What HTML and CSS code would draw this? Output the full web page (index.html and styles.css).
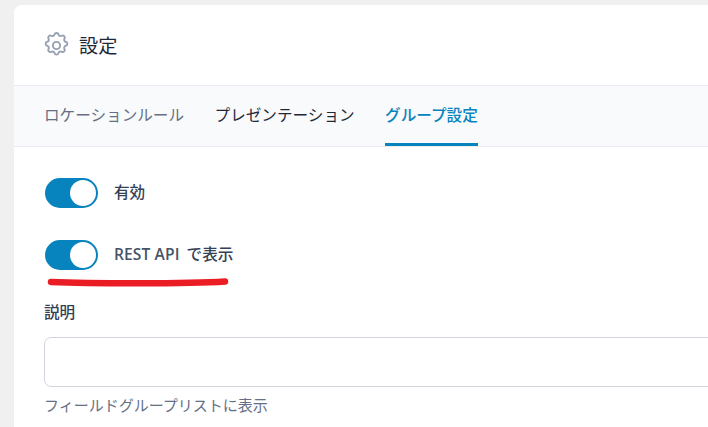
FILE: index.html
```html
<!DOCTYPE html>
<html lang="ja">
<head>
   <meta charset="UTF-8">
   <meta name="viewport" content="width=device-width">
   <title>設定</title>
   <link rel="stylesheet" href="styles.css">
</head>
<body>
   <div class="card">
       <div class="card-header">
           <svg class="gear" viewBox="0 0 24 24" fill="none" stroke="#98a2b3" stroke-width="1.6" stroke-linecap="round" stroke-linejoin="round">
               <path d="M10.33 2.9c.43-1.75 2.92-1.75 3.34 0a1.72 1.72 0 0 0 2.57 1.06c1.54-.94 3.3.83 2.36 2.36a1.72 1.72 0 0 0 1.06 2.57c1.75.43 1.75 2.92 0 3.34a1.72 1.72 0 0 0-1.06 2.57c.94 1.54-.83 3.3-2.36 2.36a1.72 1.72 0 0 0-2.57 1.06c-.43 1.75-2.92 1.75-3.34 0a1.72 1.72 0 0 0-2.57-1.06c-1.54.94-3.3-.83-2.36-2.36a1.72 1.72 0 0 0-1.06-2.57c-1.75-.43-1.75-2.92 0-3.34a1.72 1.72 0 0 0 1.06-2.57c-.94-1.54.83-3.3 2.36-2.36.99.6 2.29.07 2.57-1.06z"/>
               <circle cx="12" cy="12" r="3"/>
           </svg>
           <h2>設定</h2>
       </div>

       <div class="tabs">
           <a class="tab muted">ロケーションルール</a>
           <a class="tab">プレゼンテーション</a>
           <a class="tab active">グループ設定</a>
       </div>

       <div class="card-body">
           <div class="toggle-row">
               <span class="toggle"><span class="knob"></span></span>
               <span class="toggle-label">有効</span>
           </div>
           <div class="toggle-row second">
               <span class="toggle"><span class="knob"></span></span>
               <span class="toggle-label"><span class="latin">REST API</span> で表示</span>
               <svg class="scribble" viewBox="0 0 184 10" fill="none">
                   <path d="M4 5C40 6.5 140 7 178 4.5" stroke="#ea1c24" stroke-width="6.5" stroke-linecap="round"/>
               </svg>
           </div>

           <label class="field-label">説明</label>
           <div class="text-input"></div>
           <p class="hint">フィールドグループリストに表示</p>
       </div>
   </div>
</body>
</html>
```

FILE: styles.css
```css
* { box-sizing: border-box; }
html, body { height: 100%; }
body {
    margin: 0;
    padding: 5px 0 0 14px;
    background-color: #f0f0f0;
    font-family: "Open Sans", "Noto Sans CJK JP", sans-serif;
    color: #344054;
    overflow: hidden;
}
.card {
    width: 720px;
    min-height: 440px;
    background-color: #ffffff;
    border-radius: 8px 0 0 0;
}
.card-header {
    display: flex;
    align-items: center;
    gap: 8px;
    height: 81px;
    padding-left: 28px;
    border-bottom: 1px solid #eaecf0;
}
.gear {
    width: 29px;
    height: 29px;
}
.card-header h2 {
    margin: 0;
    font-size: 19.2px;
    font-weight: 400;
    color: #1d2939;
}
.tabs {
    display: flex;
    gap: 30.5px;
    height: 61px;
    padding-left: 30px;
    background-color: #f9fafb;
    border-bottom: 1px solid #eaecf0;
}
.tab {
    display: flex;
    align-items: center;
    height: 60px;
    font-size: 15.6px;
    color: #1d2939;
    border-bottom: 3px solid transparent;
}
.tab.muted { color: #667085; }
.tab.active {
    color: #0783be;
    font-weight: 500;
    border-bottom-color: #0783be;
}
.card-body { padding: 31px 0 0 30px; }
.toggle-row {
    position: relative;
    display: flex;
    align-items: center;
    gap: 16px;
    margin-left: 1px;
}
.toggle-row.second { margin-top: 32px; }
.toggle {
    display: flex;
    align-items: center;
    justify-content: flex-end;
    width: 53px;
    height: 30px;
    padding-right: 2px;
    background-color: #0783be;
    border-radius: 15px;
}
.knob {
    width: 26px;
    height: 26px;
    background-color: #ffffff;
    border-radius: 50%;
}
.toggle-label {
    font-size: 15.6px;
    font-weight: 500;
    line-height: 26px;
    margin-bottom: 2px;
    color: #344054;
}
.latin {
    font-weight: 600;
    color: #475467;
    letter-spacing: 0.1px;
    margin-right: 3px;
}
.scribble {
    position: absolute;
    left: 2px;
    top: 37px;
    width: 184px;
    height: 10px;
}
.field-label {
    display: block;
    margin-top: 32px;
    font-size: 15.6px;
    font-weight: 500;
    line-height: 20px;
    color: #344054;
}
.text-input {
    height: 50px;
    margin-top: 15px;
    background-color: #ffffff;
    border: 1px solid #d0d5dd;
    border-radius: 7px;
}
.hint {
    margin: 8px 0 0;
    font-size: 15px;
    line-height: 20px;
    color: #667085;
}
```
